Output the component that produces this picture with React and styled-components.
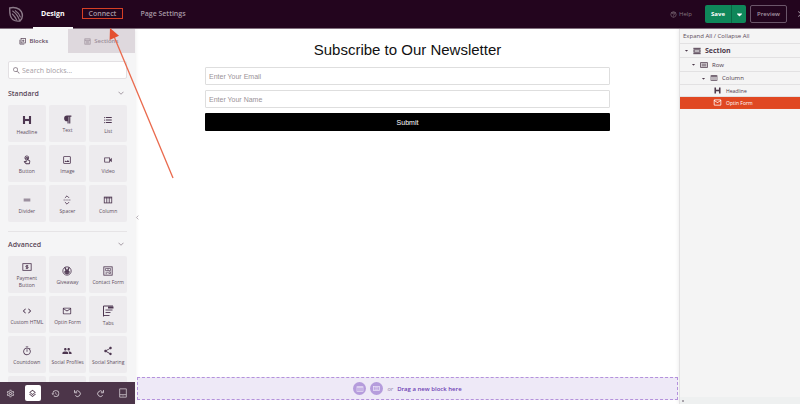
import React from "react";
import styled, { createGlobalStyle, css } from "styled-components";
import { Heading } from "lucide-react";
import { FaParagraph, FaCaretDown } from "react-icons/fa";
import {
  MdFormatListBulleted,
  MdOutlineTouchApp,
  MdOutlineImage,
  MdOutlineVideocam,
  MdDragHandle,
  MdCode,
  MdMailOutline,
  MdOutlineTimer,
  MdPeople,
  MdShare,
  MdSearch,
  MdOutlineSettings,
  MdHistory,
  MdOutlineLayers,
  MdHelpOutline,
  MdClose,
} from "react-icons/md";

const GlobalStyle = createGlobalStyle`
  * { box-sizing: border-box; }
  body {
    margin: 0;
    overflow: hidden;
    font-family: "Open Sans", "Noto Sans", sans-serif;
    color: #4d3a4b;
  }
  button, input { font-family: inherit; }
  button { border: 0; padding: 0; background: none; color: inherit; cursor: pointer; }
  svg { display: block; flex: none; }
`;

const Page = styled.div`
  position: relative;
  display: flex;
  flex-direction: column;
  height: 100vh;
  overflow: hidden;
  background: #fff;
`;

const TopBar = styled.header`
  display: flex;
  align-items: center;
  height: 29px;
  flex: none;
  padding-left: 8px;
  background: #23051e;
  border-bottom: 1px solid #81707e;
`;

const Nav = styled.nav`
  display: flex;
  align-items: stretch;
  align-self: stretch;
  gap: 1px;
  margin-left: 9px;
`;

const NavLink = styled.a`
  display: flex;
  align-items: center;
  padding: 0 8px;
  margin-bottom: -1px;
  border-bottom: 2px solid ${(p) => (p.$active ? "#fff" : "transparent")};
  color: ${(p) => (p.$active ? "#fff" : "#a597a3")};
  font-size: 7px;
  font-weight: ${(p) => (p.$active ? 700 : 600)};
  text-decoration: none;
  white-space: nowrap;
`;

const Marked = styled.span`
  display: flex;
  align-items: center;
  height: 11px;
  padding: 0 6px;
  border: 1px solid #d63f25;
`;

const Actions = styled.div`
  display: flex;
  align-items: center;
  flex: none;
  margin-left: auto;
  margin-right: -6px;
`;

const HelpLink = styled.a`
  display: flex;
  align-items: center;
  gap: 2px;
  margin-right: 13px;
  color: #85747f;
  font-size: 6px;
  text-decoration: none;
`;

const SaveGroup = styled.div`
  display: flex;
  height: 18px;
  margin-right: 4px;
  border-radius: 2px;
  overflow: hidden;
  background: #0f875a;
  color: #fff;
`;

const SaveButton = styled.button`
  width: 26px;
  font-size: 6px;
  font-weight: 700;
`;

const SaveMore = styled.button`
  display: flex;
  align-items: center;
  justify-content: center;
  width: 15px;
  border-left: 1px solid #0a6844;
`;

const PreviewButton = styled.button`
  width: 37px;
  height: 18px;
  margin-right: 9px;
  border: 1px solid #6b566a;
  border-radius: 2px;
  color: #a597a3;
  font-size: 6px;
  font-weight: 600;
`;

const CloseButton = styled.button`
  color: #a597a3;
`;

const Body = styled.div`
  display: flex;
  flex: 1;
  min-height: 0;
`;

const Sidebar = styled.aside`
  display: flex;
  flex-direction: column;
  width: 135px;
  flex: none;
  background: #f5f5f6;
  box-shadow: 0 0 4px rgba(60, 40, 60, 0.12);
`;

const PanelTabs = styled.div`
  display: flex;
  flex: none;
  height: 24px;
`;

const PanelTab = styled.button`
  display: flex;
  flex: 1;
  align-items: center;
  justify-content: center;
  gap: 3px;
  background: ${(p) => (p.$active ? "transparent" : "#ded8dd")};
  color: ${(p) => (p.$active ? "#5e4a5c" : "#9c8f9b")};
  font-size: 6px;
  font-weight: 600;
`;

const BlockList = styled.div`
  flex: 1;
  min-height: 0;
  overflow: hidden;
  padding: 8px;
`;

const SearchBox = styled.label`
  display: flex;
  align-items: center;
  gap: 1px;
  height: 18px;
  padding: 0 3px;
  margin-bottom: 2px;
  border: 1px solid #e3e0e3;
  border-radius: 2px;
  background: #fff;
  color: #857883;

  input {
    flex: 1;
    min-width: 0;
    padding: 0;
    border: 0;
    outline: 0;
    background: none;
    font-size: 7px;
  }
  input::placeholder { color: #a59ca4; }
`;

const Group = styled.section`
  & + & {
    margin-top: 9px;
    border-top: 1px solid #e6e4e6;
  }
`;

const GroupTitle = styled.h2`
  margin: 0;
`;

const GroupToggle = styled.button`
  display: flex;
  align-items: center;
  justify-content: space-between;
  width: 100%;
  height: 24px;
  padding-right: 3px;
  color: #5a4759;
  font-size: 7px;
  font-weight: 600;
`;

const Tiles = styled.div`
  display: grid;
  grid-template-columns: repeat(3, 1fr);
  grid-auto-rows: 37px;
  gap: 3px;
`;

const Tile = styled.button`
  display: flex;
  flex-direction: column;
  align-items: center;
  justify-content: center;
  gap: 3px;
  padding-top: 2px;
  min-width: 0;
  border-radius: 2px;
  background: #edebee;
  color: #4d3650;
  font-size: 5px;
  line-height: 7px;

  span { color: #604e60; }
`;

const Toolbar = styled.div`
  display: flex;
  align-items: center;
  justify-content: space-between;
  flex: none;
  height: 22px;
  padding: 0 4px 0 2px;
  background: #4c3549;
`;

const ToolButton = styled.button`
  display: flex;
  align-items: center;
  justify-content: center;
  width: 16px;
  height: 16px;
  border-radius: 2px;
  color: #c8bfc7;
  ${(p) =>
    p.$active &&
    css`
      background: #fff;
      color: #4c3549;
    `}
`;

const Canvas = styled.main`
  position: relative;
  display: flex;
  flex-direction: column;
  justify-content: space-between;
  flex: 1;
  min-width: 0;
  padding: 0 1px 4px 2px;
`;

const CollapseHandle = styled.button`
  position: absolute;
  left: 0;
  top: 186px;
  color: #8f838e;
`;

const OptinForm = styled.form`
  display: flex;
  flex-direction: column;
  gap: 5px;
  padding: 11px 68px 0;
`;

const Headline = styled.h1`
  margin: 0 0 3px;
  color: #111;
  font: 400 15px/19px "Liberation Sans", Arial, sans-serif;
  text-align: center;
`;

const Field = styled.input`
  width: 100%;
  height: 18px;
  padding: 0 3px;
  border: 1px solid #dedede;
  border-radius: 1px;
  outline: 0;
  font: 400 7px "Liberation Sans", Arial, sans-serif;

  &::placeholder { color: #9a9297; }
`;

const Submit = styled.button`
  height: 18px;
  border-radius: 1px;
  background: #000;
  color: #fff;
  font: 400 7px "Liberation Sans", Arial, sans-serif;
`;

const DropZone = styled.div`
  display: flex;
  align-items: center;
  justify-content: center;
  gap: 4px;
  height: 23px;
  border: 1px dashed #b491dc;
  background: #eee9f7;
  color: #8f81a8;
  font-size: 6px;

  b { color: #6f42b4; font-weight: 600; }
`;

const RoundButton = styled.button`
  display: flex;
  align-items: center;
  justify-content: center;
  width: 13px;
  height: 13px;
  border-radius: 50%;
  background: #b59cdc;
  color: #ece4f8;
`;

const Layers = styled.aside`
  width: 121px;
  flex: none;
  display: flex;
  flex-direction: column;
  border-left: 1px solid #e2e1e2;
  background: #f4f4f4;
  box-shadow: 0 0 4px rgba(60, 40, 60, 0.12);
`;

const ExpandRow = styled.div`
  display: flex;
  align-items: center;
  height: 15px;
  padding-left: 3px;
  border-bottom: 1px solid #e2e1e2;
  color: #5b4a59;
  font-size: 6px;
  white-space: pre;
`;

const TextButton = styled.button`
  font-size: 6px;
`;

const Layer = styled.button`
  display: flex;
  align-items: center;
  gap: 4px;
  height: ${(p) => p.$height}px;
  padding-left: ${(p) => p.$indent}px;
  border-bottom: 1px solid ${(p) => (p.$active ? "#e04d26" : "#e2e1e2")};
  background: ${(p) => (p.$active ? "#e04822" : "transparent")};
  color: ${(p) => (p.$active ? "#fff" : "#4d3a4b")};
  font-size: ${(p) => p.$size}px;
  font-weight: ${(p) => (p.$bold ? 700 : 400)};
`;

const Crumbs = styled.div`
  height: 7px;
  margin-top: auto;
  padding: 3px 2px;
  background: #eef0f0;

  &::before {
    content: "";
    display: block;
    width: 2px;
    height: 2px;
    background: #a9a4ab;
  }
`;

const Arrow = styled.svg`
  position: absolute;
  left: 105px;
  top: 26px;
  pointer-events: none;
`;

const Line = ({ size = 10, width = 2, box = 24, children }) => (
  <svg width={size} height={size} viewBox={`0 0 ${box} ${box}`} fill="none" stroke="currentColor" strokeWidth={width}>
    {children}
  </svg>
);

const Logo = () => (
  <svg width="16" height="17" viewBox="0 0 48 51" fill="none" stroke="#8c7a89" strokeWidth="4.2" strokeLinecap="round">
    <path d="M5 6 C18 2 34 6 40 17 C46 29 42 39 36 45 C22 47 11 42 7 29 C5 22 5 14 5 6Z" />
    <path d="M14 15 C23 21 31 31 35 44" strokeWidth="3.4" />
    <path d="M13 24 C18 29 23 35 26 42" strokeWidth="3.4" />
    <path d="M22 14 C29 18 34 25 37 33" strokeWidth="3.4" />
  </svg>
);

const ChevronDown = () => (
  <Line size={6} width={3}>
    <path d="M2 7l10 10L22 7" stroke="#8a7d89" />
  </Line>
);

const SectionIcon = ({ size = 8 }) => (
  <Line size={size} width={3}>
    <path d="M1 4h22M1 20h22" />
    <rect x="3" y="8.500" width="18" height="7" />
  </Line>
);

const RowIcon = ({ size = 8 }) => (
  <Line size={size} width={2.5}>
    <rect x="2" y="5" width="20" height="14" />
    <path d="M5 9.500h14M5 14.500h14" />
  </Line>
);

const ColumnIcon = ({ size = 10 }) => (
  <Line size={size}>
    <rect x="3" y="5" width="18" height="14" />
    <path d="M3 7h18M9 5v14M15 5v14" />
  </Line>
);

const BlocksIcon = () => (
  <Line size={7} width={2.6}>
    <rect x="7" y="2" width="15" height="15" />
    <path d="M3 6v15h15M14.500 5.500v8M10.500 9.500h8" />
  </Line>
);

const SectionsIcon = () => (
  <Line size={7} width={2.6}>
    <rect x="3" y="3" width="18" height="18" />
    <path d="M3 8h18M7 13h10M7 17h10" />
  </Line>
);

const SpacerIcon = () => (
  <Line size={10}>
    <path d="M7 7l5-5 5 5M7 17l5 5 5-5" />
    <path d="M4 12h16" strokeDasharray="2.500 2" />
  </Line>
);

const PaymentIcon = () => (
  <Line size={10}>
    <rect x="2" y="4" width="20" height="16" />
    <path d="M15 9h-4.500a1.500 1.500 0 000 3h3a1.500 1.500 0 010 3H9M12 7v10" />
  </Line>
);

const GiveawayIcon = () => (
  <Line size={10}>
    <circle cx="12" cy="12" r="10" />
    <path d="M7 3l2 8c-4 2-3 8 3 8s7-6 3-8l2-8-4 7h-2L7 3z" fill="currentColor" />
    <path d="M9 15h1M14 15h1" stroke="#edebee" />
  </Line>
);

const ContactIcon = () => (
  <Line size={10}>
    <rect x="2" y="2" width="20" height="20" />
    <path d="M6 6h12v5H6zM6 15h6M6 18.500h4M14 14h4v4h-4zM12 6v5" strokeWidth="1.500" />
  </Line>
);

const TabsIcon = () => (
  <Line size={12}>
    <path d="M3 23V2h19" />
    <path d="M12 3h11v4H12z" fill="currentColor" stroke="none" />
    <path d="M7 10h14M7 15h10M3 21h12" strokeWidth="1.800" />
  </Line>
);

const TabletIcon = () => (
  <Line size={10}>
    <path d="M4 2h16v20H4zM4 16h16M11 19h2" />
  </Line>
);

const RedoArrow = ({ flip }) => (
  <Line size={9} width={2.6}>
    <g transform={flip ? "translate(24 0) scale(-1 1)" : undefined}>
      <path d="M18 17a7.500 7.500 0 11-.5-9.500" />
      <path d="M20 3v7h-7" />
    </g>
  </Line>
);

const HIcon = ({ size = 10 }) => <Heading size={size} strokeWidth={4.2} strokeLinecap="butt" />;

const standardBlocks = [
  { label: "Headline", icon: <HIcon size={12} /> },
  { label: "Text", icon: <FaParagraph size={9} /> },
  { label: "List", icon: <MdFormatListBulleted size={10} /> },
  { label: "Button", icon: <MdOutlineTouchApp size={10} /> },
  { label: "Image", icon: <MdOutlineImage size={10} /> },
  { label: "Video", icon: <MdOutlineVideocam size={10} /> },
  { label: "Divider", icon: <MdDragHandle size={10} /> },
  { label: "Spacer", icon: <SpacerIcon /> },
  { label: "Column", icon: <ColumnIcon /> },
];

const advancedBlocks = [
  { label: <>Payment<br />Button</>, icon: <PaymentIcon /> },
  { label: "Giveaway", icon: <GiveawayIcon /> },
  { label: "Contact Form", icon: <ContactIcon /> },
  { label: "Custom HTML", icon: <MdCode size={10} /> },
  { label: "Optin Form", icon: <MdMailOutline size={10} /> },
  { label: "Tabs", icon: <TabsIcon /> },
  { label: "Countdown", icon: <MdOutlineTimer size={10} /> },
  { label: "Social Profiles", icon: <MdPeople size={10} /> },
  { label: "Social Sharing", icon: <MdShare size={10} /> },
  {},
  {},
  {},
];

const tools = [
  { name: "Settings", icon: <MdOutlineSettings size={9} /> },
  { name: "Layers", icon: <MdOutlineLayers size={9} />, active: true },
  { name: "History", icon: <MdHistory size={9} /> },
  { name: "Undo", icon: <RedoArrow flip /> },
  { name: "Redo", icon: <RedoArrow /> },
  { name: "Mobile preview", icon: <TabletIcon /> },
];

const layers = [
  { label: "Section", icon: <SectionIcon />, indent: 4, height: 14, size: 7, bold: true, caret: true },
  { label: "Row", icon: <RowIcon />, indent: 11, height: 14, size: 6, caret: true },
  { label: "Column", icon: <ColumnIcon size={8} />, indent: 21, height: 13, size: 6, caret: true },
  { label: "Headline", icon: <HIcon size={9} />, indent: 33, height: 12, size: 5 },
  { label: "Optin Form", icon: <MdMailOutline size={9} />, indent: 33, height: 12, size: 5, active: true },
];

const BlockGroup = ({ title, blocks }) => (
  <Group>
    <GroupTitle>
      <GroupToggle>
        {title}
        <ChevronDown />
      </GroupToggle>
    </GroupTitle>
    <Tiles>
      {blocks.map((block, i) => (
        <Tile key={i}>
          {block.icon}
          <span>{block.label}</span>
        </Tile>
      ))}
    </Tiles>
  </Group>
);

const App = () => {
  return (
    <Page>
      <GlobalStyle />
      <TopBar>
        <Logo />
        <Nav>
          <NavLink href="#design" $active>Design</NavLink>
          <NavLink href="#connect">
            <Marked>Connect</Marked>
          </NavLink>
          <NavLink href="#settings">Page Settings</NavLink>
        </Nav>
        <Actions>
          <HelpLink href="#help">
            <MdHelpOutline size={7} /> Help
          </HelpLink>
          <SaveGroup>
            <SaveButton>Save</SaveButton>
            <SaveMore aria-label="More save options">
              <FaCaretDown size={9} />
            </SaveMore>
          </SaveGroup>
          <PreviewButton>Preview</PreviewButton>
          <CloseButton aria-label="Close">
            <MdClose size={10} />
          </CloseButton>
        </Actions>
      </TopBar>

      <Body>
        <Sidebar>
          <PanelTabs>
            <PanelTab $active><BlocksIcon /> Blocks</PanelTab>
            <PanelTab><SectionsIcon /> Sections</PanelTab>
          </PanelTabs>
          <BlockList>
            <SearchBox>
              <MdSearch size={9} />
              <input type="text" aria-label="Search blocks" placeholder="Search blocks..." />
            </SearchBox>
            <BlockGroup title="Standard" blocks={standardBlocks} />
            <BlockGroup title="Advanced" blocks={advancedBlocks} />
          </BlockList>
          <Toolbar>
            {tools.map((tool) => (
              <ToolButton key={tool.name} aria-label={tool.name} $active={tool.active}>
                {tool.icon}
              </ToolButton>
            ))}
          </Toolbar>
        </Sidebar>

        <Canvas>
          <CollapseHandle aria-label="Collapse panel">
            <Line size={5} width={3}>
              <path d="M16 3l-9 9 9 9" />
            </Line>
          </CollapseHandle>
          <OptinForm onSubmit={(e) => e.preventDefault()}>
            <Headline>Subscribe to Our Newsletter</Headline>
            <Field type="email" aria-label="Email" placeholder="Enter Your Email" />
            <Field type="text" aria-label="Name" placeholder="Enter Your Name" />
            <Submit type="submit">Submit</Submit>
          </OptinForm>
          <DropZone>
            <RoundButton aria-label="Add columns"><ColumnIcon size={8} /></RoundButton>
            <RoundButton aria-label="Add section"><RowIcon size={7} /></RoundButton>
            <em>or</em>
            <b>Drag a new block here</b>
          </DropZone>
        </Canvas>

        <Layers>
          <ExpandRow>
            <TextButton>Expand All</TextButton> / <TextButton>Collapse All</TextButton>
          </ExpandRow>
          {layers.map((layer) => (
            <Layer
              key={layer.label}
              $indent={layer.indent}
              $height={layer.height}
              $size={layer.size}
              $bold={layer.bold}
              $active={layer.active}
            >
              {layer.caret && <FaCaretDown size={5} />}
              {layer.icon}
              {layer.label}
            </Layer>
          ))}
          <Crumbs />
        </Layers>
      </Body>

      <Arrow width="72" height="156" viewBox="0 0 72 156" fill="#e4502f">
        <path d="M8 8L68 152" stroke="#ea6a4d" strokeWidth="1.300" />
        <path d="M5 2l-.4 12 9.400-4.200z" />
      </Arrow>
    </Page>
  );
};

export default App;
